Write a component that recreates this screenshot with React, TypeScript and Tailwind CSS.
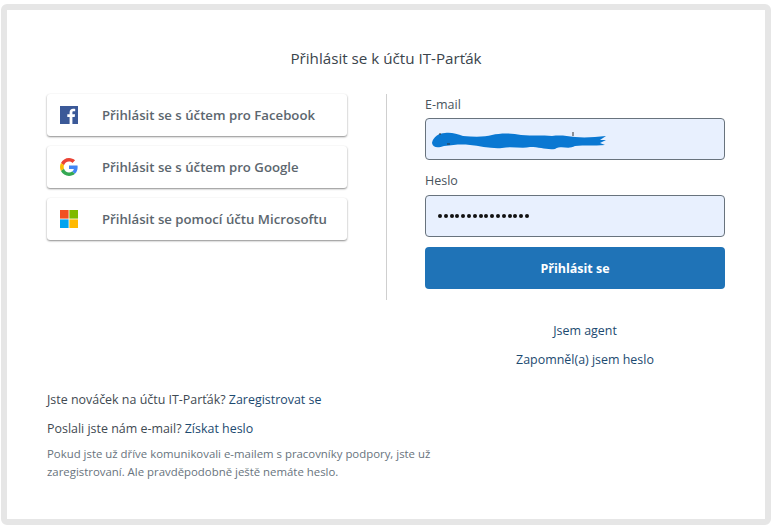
export default function App() {
  const font = { fontFamily: '"Open Sans", "Liberation Sans", sans-serif' };
  return (
    <div className="w-[771px] h-[527px] bg-white pt-1 pl-px overflow-hidden" style={font}>
      <div className="w-[770px] h-[521px] border-[6px] border-[#e6e6e6] rounded-md bg-white px-10 pt-[38px]">
        <h1 className="text-center text-[15.2px] leading-[20px] h-[20px] text-[#3a444c]">Přihlásit se k účtu IT-Parťák</h1>
        <div className="flex mt-[26px]">
          <div className="w-[300px] flex flex-col gap-[10px]">
            <Social label="Přihlásit se s účtem pro Facebook"><Facebook /></Social>
            <Social label="Přihlásit se s účtem pro Google"><Google /></Social>
            <Social label="Přihlásit se pomocí účtu Microsoftu"><Microsoft /></Social>
          </div>
          <div className="w-px h-[206px] bg-[#cfcfcf] ml-[39px]" />
          <div className="w-[300px] ml-[38px]">
            <div className="text-[12.5px] leading-[20px] h-[24px] pt-px font-medium text-[#49545c]">E-mail</div>
            <div className="relative h-[42px] bg-[#e8f0fe] border border-[#68737d] rounded-[4px]">
              <svg className="absolute left-[4px] top-[11px]" width="178" height="22" viewBox="0 0 178 22">
                <path fill="#0a78d2" d="M2 13 C3 7 9 3 15 3 C21 2 27 4 33 6 C45 7 55 7 62 5 C70 3 82 3 91 5 C103 6 112 5 122 6 C131 5 136 6 145 7 C156 8 165 7 176 6 L170 10 L176 10 L170 13 L175 15 C163 16 155 15 145 16 C138 20 132 15 125 19 C116 20 110 17 100 17 C92 19 82 16 72 18 C62 19 50 16 40 15 C30 14 24 15 14 16 C8 18 3 18 2 13 Z" />
                <path stroke="#333" strokeWidth="1" d="M143 2v4M9 4h2M17 14h3" />
              </svg>
            </div>
            <div className="text-[12.5px] leading-[20px] h-[35px] pt-[11px] text-[#49545c]">Heslo</div>
            <div className="h-[42px] bg-[#e8f0fe] border border-[#68737d] rounded-[4px] flex items-center pl-3 gap-[1.8px]">
              {Array.from({ length: 16 }, (_, i) => (
                <span key={i} className="w-[4px] h-[4px] rounded-full bg-[#111]" />
              ))}
            </div>
            <button className="mt-[10px] w-full h-[42px] rounded-[4px] bg-[#1f73b7] text-white text-[12.5px] font-bold pt-[2px]">Přihlásit se</button>
            <div className="pl-[20px] text-center text-[12.45px] text-[#1c4a70] mt-[32px] leading-[20px]">Jsem agent</div>
            <div className="pl-[20px] text-center text-[12.45px] text-[#1c4a70] mt-[9px] leading-[20px]">Zapomněl(a) jsem heslo</div>
          </div>
        </div>
        <div className="mt-[20px] w-[400px] text-[12.45px]">
          <p className="leading-[20px] text-[#3f4a52]">Jste nováček na účtu IT-Parťák? <span className="text-[#1c4a70]">Zaregistrovat se</span></p>
          <p className="leading-[20px] mt-[9px] text-[#3f4a52]">Poslali jste nám e-mail? <span className="text-[#1c4a70]">Získat heslo</span></p>
          <p className="text-[11.4px] leading-[18px] mt-[6px] text-[#68737d]">Pokud jste už dříve komunikovali e-mailem s pracovníky podpory, jste už zaregistrovaní. Ale pravděpodobně ještě nemáte heslo.</p>
        </div>
      </div>
    </div>
  );
}

function Social({ label, children }: { label: string; children: React.ReactNode }) {
  return (
    <div className="h-[42px] bg-white rounded-[3px] shadow-[0_1px_2px_rgba(0,0,0,0.45),0_0_1px_rgba(0,0,0,0.04)] flex items-center pl-[13px]">
      <span className="w-[18px] h-[18px] block shrink-0">{children}</span>
      <span className="ml-[24px] pt-[1px] text-[13.2px] font-semibold text-[#5c666e] whitespace-nowrap">{label}</span>
    </div>
  );
}

function Facebook() {
  return (
    <svg width="18" height="18" viewBox="0 0 18 18">
      <rect width="18" height="18" fill="#3b5998" />
      <path fill="#fff" d="M12.4 18v-7h2.3l.4-2.700h-2.700V6.600c0-.8.2-1.300 1.300-1.300h1.500V2.900c-.3 0-1.100-.1-2.100-.1-2.100 0-3.500 1.300-3.500 3.600v1.900H7.300V11h2.300v7z" />
    </svg>
  );
}

function Google() {
  return (
    <svg width="18" height="18" viewBox="0 0 48 48">
      <path fill="#EA4335" d="M24 9.500c3.500 0 6.700 1.200 9.200 3.600l6.900-6.900C35.900 2.400 30.500 0 24 0 14.600 0 6.500 5.400 2.600 13.200l8 6.200C12.500 13.600 17.800 9.500 24 9.500z" />
      <path fill="#4285F4" d="M47 24.500c0-1.600-.1-3.100-.4-4.500H24v9h13c-.6 3-2.200 5.500-4.800 7.200l7.700 6C44.400 38 47 31.800 47 24.500z" />
      <path fill="#FBBC05" d="M10.600 28.600c-.5-1.400-.8-3-.8-4.600s.3-3.200.8-4.600l-8-6.200C.9 16.500 0 20.100 0 24s.9 7.500 2.600 10.800l8-6.200z" />
      <path fill="#34A853" d="M24 48c6.500 0 11.900-2.100 15.900-5.800l-7.700-6c-2.200 1.400-5 2.300-8.200 2.300-6.200 0-11.500-4.200-13.400-9.900l-8 6.200C6.500 42.600 14.600 48 24 48z" />
    </svg>
  );
}

function Microsoft() {
  return (
    <svg width="18" height="18" viewBox="0 0 18 18">
      <rect width="8.600" height="8.600" fill="#f25022" />
      <rect x="9.400" width="8.600" height="8.600" fill="#7fba00" />
      <rect y="9.400" width="8.600" height="8.600" fill="#00a4ef" />
      <rect x="9.400" y="9.400" width="8.600" height="8.600" fill="#ffb900" />
    </svg>
  );
}
